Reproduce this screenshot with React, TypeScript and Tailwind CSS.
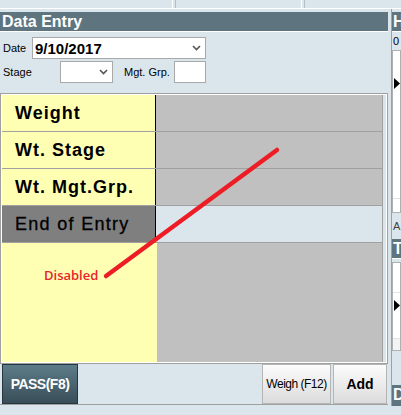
import React from 'react';

const rows = ['Weight', 'Wt. Stage', 'Wt. Mgt.Grp.'];

// little "v" arrow used by the dropdowns
const Chevron: React.FC = () => (
  <svg width="9" height="6" viewBox="0 0 9 6" className="shrink-0">
    <path d="M1 1 L4.5 4.5 L8 1" fill="none" stroke="#555" strokeWidth="1.6" />
  </svg>
);

const Triangle: React.FC = () => (
  <svg width="6" height="11" viewBox="0 0 6 11">
    <path d="M0 0 L6 5.5 L0 11 Z" fill="#000" />
  </svg>
);

export default function App() {
  return (
    <div className="relative w-[401px] h-[415px] overflow-hidden bg-[#dae6ec] font-['Liberation_Sans',Arial,sans-serif] text-black">
      {/* Top strip */}
      <div className="flex h-[9px] border-b border-white">
        <div className="w-[173px] border-r border-white" />
        <div className="w-[3px] border-r border-[#b4bfc5]" />
        <div className="w-[126px] border-r border-white" />
        <div className="w-[3px] border-r border-[#b4bfc5]" />
        <div className="flex-1" />
      </div>

      <div className="flex">
        {/* Data entry panel */}
        <div className="w-[388px] flex flex-col">
          <div className="mt-[3px] h-[20px] bg-[#5e7580] border-b border-white pl-[2px] text-white font-bold text-[16px] leading-[19px]">
            Data Entry
          </div>

          <div className="mt-[5px] flex items-center h-[22px]">
            <span className="w-[32px] pl-[3px] text-[11px]">Date</span>
            <div className="w-[174px] h-[22px] bg-white border border-[#a9a9a9] flex items-center justify-between pl-[2px] pr-[4px]">
              <span className="font-bold text-[15px] leading-none">9/10/2017</span>
              <Chevron />
            </div>
          </div>

          <div className="mt-[2px] flex items-center h-[22px]">
            <span className="w-[60px] pl-[3px] text-[11px]">Stage</span>
            <div className="w-[53px] h-[22px] bg-white border border-[#a9a9a9] flex items-center justify-end pr-[4px]">
              <Chevron />
            </div>
            <span className="ml-[11px] w-[50px] text-[11px]">Mgt. Grp.</span>
            <div className="w-[32px] h-[22px] bg-white border border-[#a9a9a9]" />
          </div>

          {/* Entry grid */}
          <div className="mt-[10px] border border-[#a0a0a0] bg-white p-px flex">
            <div className="w-[380px] flex flex-col">
              {rows.map((label) => (
                <div key={label} className="flex h-[37px] border-b border-[#a0a0a0]">
                  <div className="w-[154px] bg-[#ffffb4] border-r border-black pl-[13px] flex items-center font-bold text-[18px] tracking-[1px]">
                    {label}
                  </div>
                  <div className="flex-1 bg-[#c0c0c0]" />
                </div>
              ))}
              <div className="flex h-[37px] border-b border-[#a0a0a0]">
                <div className="w-[154px] bg-[#7f7f7f] border-r border-black pl-[13px] flex items-center text-[18px] tracking-[1.3px] [-webkit-text-stroke:0.3px_black]">
                  End of Entry
                </div>
                <div className="flex-1 bg-[#dae6ec]" />
              </div>
              <div className="flex h-[119px]">
                <div className="w-[155px] bg-[#ffffb4] pl-[42px] pt-[20px]">
                  <span className="font-['Open_Sans',sans-serif] font-semibold text-[13px] leading-[18px] text-[#e8242c]">
                    Disabled
                  </span>
                </div>
                <div className="flex-1 bg-[#c0c0c0]" />
              </div>
            </div>
            <div className="flex-1 border-l border-[#a0a0a0] bg-[#dae6ec]" />
          </div>

          {/* Buttons */}
          <div className="flex h-[41px] border-b border-[#a0a0a0] pl-[2px] pr-px">
            <button className="w-[76px] h-[40px] border border-[#26363e] bg-gradient-to-b from-[#5d7c8a] to-[#394e58] text-white font-bold text-[14px] tracking-[-0.5px]">
              PASS(F8)
            </button>
            <div className="flex-1" />
            <button className="w-[69px] h-[40px] border border-[#b5b5b5] bg-gradient-to-b from-[#fcfcfc] to-[#dcdcdc] text-[12px] tracking-[-0.5px]">
              Weigh (F12)
            </button>
            <button className="ml-[2px] w-[54px] h-[40px] border border-[#b5b5b5] bg-gradient-to-b from-[#fcfcfc] to-[#dcdcdc] font-bold text-[14px]">
              Add
            </button>
          </div>
        </div>

        {/* Right-hand panel, cut off at the window edge */}
        <div className="flex-1 pl-[3px] overflow-hidden">
          <div className="border-l border-[#a0a0a0] flex flex-col">
            <div className="mt-[3px] h-[20px] bg-[#5e7580] border-b border-white pl-px text-white font-bold text-[16px] leading-[19px]">
              H
            </div>
            <div className="h-[18px] pl-px text-[11px] leading-[18px]">0</div>
            <div className="h-[163px] bg-white border border-[#b0b0b0] flex flex-col">
              <div className="h-[27px]" />
              <div className="pl-px">
                <Triangle />
              </div>
              <div className="flex-1" />
              <div className="h-[14px] border-t border-[#e4e4e4]" />
            </div>
            <div className="h-[26px] pl-px text-[11px] leading-[26px] text-[#444]">A</div>
            <div className="h-[20px] bg-[#5e7580] border-b border-white pl-px text-white font-bold text-[16px] leading-[19px]">
              T
            </div>
            <div className="mt-[3px] h-[89px] bg-white border border-[#b0b0b0] flex flex-col">
              <div className="h-[30px] border-b border-[#e4e4e4]" />
              <div className="pl-px pt-[7px]">
                <Triangle />
              </div>
              <div className="flex-1" />
              <div className="h-[12px] border-t border-[#e4e4e4] bg-[#f4f4f4]" />
            </div>
            <div className="mt-[34px] h-[21px] bg-[#5e7580] pl-px text-white font-bold text-[16px] leading-[19px]">
              D
            </div>
          </div>
        </div>
      </div>

      {/* Red annotation stroke over the grid */}
      <svg className="absolute left-0 top-0 pointer-events-none" width="401" height="415">
        <line x1="106" y1="276" x2="277" y2="150" stroke="#ee1c25" strokeWidth="4.5" strokeLinecap="round" />
      </svg>
    </div>
  );
}
